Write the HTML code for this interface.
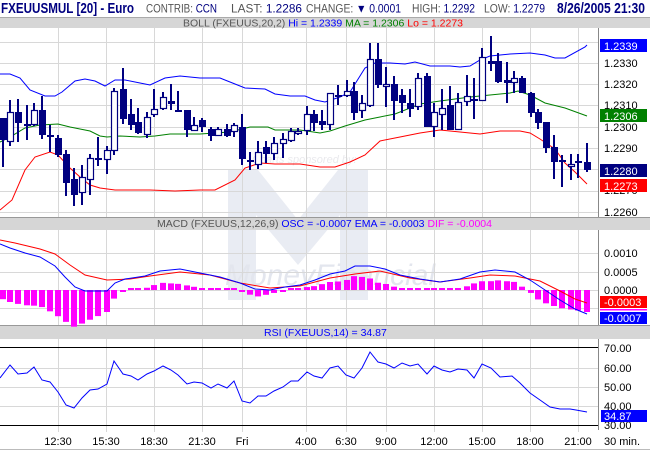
<!DOCTYPE html>
<html><head><meta charset="utf-8"><style>
body{margin:0;background:#fff;}
svg{display:block;font-family:"Liberation Sans",Arial,sans-serif;}
</style></head><body>
<svg id="s" width="650" height="450" viewBox="0 0 650 450" xmlns="http://www.w3.org/2000/svg">
<rect width="650" height="450" fill="#fff"/>
<!-- header -->
<text x="1" y="13" font-size="15" font-weight="bold" fill="#000080" textLength="133" lengthAdjust="spacingAndGlyphs">FXEUUSMUL [20] - Euro</text>
<text x="146" y="12.5" font-size="11.5" fill="#555" textLength="71" lengthAdjust="spacingAndGlyphs">CONTRIB: <tspan fill="#000080">CCN</tspan></text>
<text x="231" y="12.5" font-size="11.5" fill="#555" textLength="71" lengthAdjust="spacingAndGlyphs">LAST: <tspan fill="#000080">1.2286</tspan></text>
<text x="306" y="12.5" font-size="11.5" fill="#555" textLength="95" lengthAdjust="spacingAndGlyphs">CHANGE: <tspan fill="#000080">▼ 0.0001</tspan></text>
<text x="412" y="12.5" font-size="11.5" fill="#555" textLength="63" lengthAdjust="spacingAndGlyphs">HIGH: <tspan fill="#000080">1.2292</tspan></text>
<text x="484" y="12.5" font-size="11.5" fill="#555" textLength="61" lengthAdjust="spacingAndGlyphs">LOW: <tspan fill="#000080">1.2279</tspan></text>
<text x="557" y="13" font-size="15" font-weight="bold" fill="#000080" textLength="88" lengthAdjust="spacingAndGlyphs">8/26/2005 21:30</text>
<!-- bars -->
<rect x="0" y="17" width="650" height="11" fill="#d6d6d6"/>
<line x1="0" y1="17.5" x2="650" y2="17.5" stroke="#aaa"/>
<text x="183" y="26.5" font-size="10.5" fill="#555" textLength="280" lengthAdjust="spacingAndGlyphs">BOLL (FXEUUS,20,2) <tspan fill="#0000ff">Hi = 1.2339</tspan> <tspan fill="#008000">MA = 1.2306</tspan> <tspan fill="#ff0000">Lo = 1.2273</tspan></text>
<!-- watermark -->
<g opacity="0.3">
<text x="252" y="163" font-size="11" font-style="italic" fill="#b8b8c4">Charts sponsored by:</text>
<path d="M228 170 L258 170 L298 220 L338 170 L368 170 L368 300 L340 300 L340 215 L298 265 L256 215 L256 300 L228 300 Z" fill="#b9c1d8"/>
<text x="225" y="285" font-size="30" fill="#a5aec8" font-style="italic">MoneyFinancial</text>
</g>
<rect x="0" y="217" width="650" height="13" fill="#d6d6d6"/>
<line x1="0" y1="217.5" x2="650" y2="217.5" stroke="#999"/>
<text x="157" y="227" font-size="10.5" fill="#555" textLength="335" lengthAdjust="spacingAndGlyphs">MACD (FXEUUS,12,26,9) <tspan fill="#0000ff">OSC = -0.0007</tspan> <tspan fill="#0000ff">EMA = -0.0003</tspan> <tspan fill="#ff00ff">DIF = -0.0004</tspan></text>
<rect x="0" y="325" width="650" height="14" fill="#d6d6d6"/>
<line x1="0" y1="325.5" x2="650" y2="325.5" stroke="#999"/>
<text x="264" y="336" font-size="10.5" fill="#0000ff">RSI (FXEUUS,14) = 34.87</text>
<g id="grid" stroke="#d8d8d8" stroke-width="1"></g>
<g id="plot"></g>
<!-- separators -->
<line x1="598.5" y1="28" x2="598.5" y2="217" stroke="#888"/>
<line x1="598.5" y1="230" x2="598.5" y2="325" stroke="#888"/>
<line x1="598.5" y1="339" x2="598.5" y2="430" stroke="#888"/>
<line x1="0" y1="449.5" x2="650" y2="449.5" stroke="#bbb"/>
<!-- price axis -->
<g font-size="11" fill="#000">
<text x="604" y="67">1.2330</text><text x="604" y="88">1.2320</text><text x="604" y="109">1.2310</text>
<text x="604" y="131">1.2300</text><text x="604" y="152">1.2290</text><text x="604" y="194">1.2270</text><text x="604" y="216">1.2260</text>
<text x="604" y="257">0.0010</text><text x="604" y="276">0.0005</text><text x="604" y="294">0.0000</text>
<text x="604" y="352">70.00</text><text x="604" y="372">60.00</text><text x="604" y="391">50.00</text><text x="604" y="410">40.00</text><text x="604" y="429">30.00</text>
</g>
<g font-size="11" fill="#fff">
<rect x="600" y="39" width="47" height="13" fill="#0000ff"/><text x="604" y="50">1.2339</text>
<rect x="600" y="109" width="47" height="13" fill="#008000"/><text x="604" y="120">1.2306</text>
<rect x="600" y="164" width="47" height="13" fill="#000080"/><text x="604" y="175">1.2280</text>
<rect x="600" y="179" width="47" height="13" fill="#ff0000"/><text x="604" y="190">1.2273</text>
<rect x="600" y="296" width="47" height="12" fill="#ff0000"/><text x="604" y="306">-0.0003</text>
<rect x="600" y="309" width="47" height="1.5" fill="#ff00ff"/>
<rect x="600" y="312" width="47" height="12" fill="#0000ff"/><text x="604" y="322">-0.0007</text>
<rect x="601" y="410" width="46" height="12" fill="#0000ff"/><text x="604" y="420">34.87</text>
</g>
<g font-size="11" fill="#000" text-anchor="middle">
<text x="58" y="445">12:30</text><text x="106" y="445">15:30</text><text x="154" y="445">18:30</text><text x="202" y="445">21:30</text>
<text x="242" y="445">Fri</text><text x="306" y="445">4:00</text><text x="346" y="445">6:30</text><text x="386" y="445">9:00</text>
<text x="434" y="445">12:00</text><text x="482" y="445">15:00</text><text x="530" y="445">18:00</text><text x="578" y="445">21:00</text>
<text x="622" y="445">30 min.</text>
</g>
</svg>
<script>
var NS="http://www.w3.org/2000/svg";
function el(p,t,a){var e=document.createElementNS(NS,t);for(var k in a)e.setAttribute(k,a[k]);p.appendChild(e);return e;}
var grid=document.getElementById("grid"),plot=document.getElementById("plot");
var vx=[58,106,154,202,242,306,346,386,434,482,530,578];
vx.forEach(function(x){
 el(grid,"line",{x1:x+.5,y1:28,x2:x+.5,y2:217});
 el(grid,"line",{x1:x+.5,y1:230,x2:x+.5,y2:325});
 el(grid,"line",{x1:x+.5,y1:339,x2:x+.5,y2:432});
});
[42,63,84,105,127,148,169,191,212].forEach(function(y){el(grid,"line",{x1:0,y1:y+.5,x2:598,y2:y+.5});});
[253,272,290,308].forEach(function(y){el(grid,"line",{x1:0,y1:y+.5,x2:598,y2:y+.5});});
[368,387,406].forEach(function(y){el(grid,"line",{x1:0,y1:y+.5,x2:598,y2:y+.5});});
el(plot,"line",{x1:0,y1:347.5,x2:598,y2:347.5,stroke:"#000"});
el(plot,"line",{x1:0,y1:425.5,x2:598,y2:425.5,stroke:"#000"});
function pts(a){return a.map(function(p){return p[0]+","+p[1];}).join(" ");}
function interp(a,x){for(var i=0;i<a.length-1;i++){if(x>=a[i][0]&&x<=a[i+1][0]){var t=(x-a[i][0])/(a[i+1][0]-a[i][0]);return a[i][1]+t*(a[i+1][1]-a[i][1]);}}return a[a.length-1][1];}
var up=[[0,74],[10,74],[20,78],[30,90],[45,96],[55,96],[62,92],[75,81],[85,79],[95,81],[105,86],[115,80],[125,80],[140,83],[150,85],[165,78],[180,76],[200,78],[220,78],[235,84],[245,88],[265,89],[275,94],[290,96],[305,96],[315,100],[325,102],[340,97],[350,92],[365,68],[375,63],[390,63],[405,64],[415,62],[430,66],[450,66],[460,67],[470,66],[480,60],[490,56],[510,54],[530,53],[545,55],[555,58],[565,58],[585,47],[587,45]];
var mid=[[0,142],[10,137],[25,128],[40,125],[58,124],[70,127],[90,131],[100,136],[107,137],[120,136],[140,137],[155,136],[170,134],[200,134],[230,132],[250,127],[268,127],[275,130],[300,130],[320,133],[330,131],[345,126],[365,120],[380,117],[395,114],[420,104],[440,101],[470,97],[490,95],[510,93],[518,91],[530,95],[545,103],[565,108],[587,116]];
var lo=[[0,210],[12,200],[25,170],[35,157],[50,152],[58,155],[70,168],[80,177],[90,185],[100,188],[115,190],[150,190],[175,191],[200,190],[215,190],[235,180],[245,168],[260,163],[275,164],[300,164],[320,167],[335,167],[350,162],[365,155],[380,141],[400,137],[420,133],[440,130],[460,132],[480,134],[500,131],[520,131],[530,133],[540,139],[555,149],[565,163],[575,172],[587,184]];
var mb=[[0,244],[10,248],[25,253],[40,257],[55,266],[65,277],[75,287],[85,291],[107,291],[115,283],[125,279],[145,276],[160,271],[180,269],[200,273],[220,277],[240,283],[255,289],[270,290],[285,287],[300,285],[315,280],[330,274],[345,271],[355,266],[370,266],[385,269],[400,275],[420,279],[440,282],[460,279],[480,272],[495,270],[515,272],[530,280],[545,290],[560,300],[575,309],[587,314]];
var mr=[[0,240],[15,243],[40,249],[55,254],[70,265],[85,275],[107,280],[130,279],[150,276],[180,272],[210,275],[240,283],[270,288],[300,286],[330,278],[355,274],[380,271],[410,278],[440,282],[470,278],[490,275],[515,276],[540,281],[560,291],[575,299],[587,303]];
var rsi=[[0,378],[10,365],[18,374],[27,373],[34,367],[42,380],[50,382],[58,392],[66,405],[74,408],[82,398],[90,390],[98,389],[107,384],[114,361],[123,374],[131,376],[138,380],[147,374],[154,371],[163,366],[171,370],[178,375],[187,384],[194,382],[202,383],[211,388],[218,384],[227,388],[234,381],[242,401],[250,403],[258,396],[266,396],[274,391],[283,387],[291,381],[298,381],[307,372],[314,376],[322,378],[330,368],[338,366],[346,375],[354,378],[362,368],[370,352],[378,362],[386,364],[394,368],[402,363],[410,366],[418,364],[427,374],[434,366],[442,370],[450,372],[458,369],[467,370],[474,378],[482,364],[491,368],[500,377],[512,376],[520,383],[530,393],[540,400],[550,407],[560,409],[570,409],[576,410],[587,412]];
var C=[[3,118,140,118,167,1],[10,112,142,100,146,0],[18,112,123,99,142,1],[27,124,126,105,140,1],[34,110,125,103,126,0],[42,110,135,96,139,1],[50,135,137,125,152,1],[58,138,155,135,157,1],[66,154,183,150,196,1],[74,179,195,168,206,1],[82,177,193,165,205,0],[90,158,180,154,195,0],[98,158,159,137,166,1],[107,150,160,146,174,0],[114,91,151,88,155,0],[123,89,119,68,124,1],[131,114,125,99,130,1],[138,122,133,108,134,1],[147,117,135,112,138,0],[154,109,115,89,117,0],[163,97,109,92,110,0],[171,101,104,84,110,1],[178,110,112,91,112,1],[187,110,130,110,137,1],[194,125,131,117,131,0],[202,120,127,118,132,1],[211,129,136,127,141,1],[218,129,136,127,136,0],[227,129,136,124,137,1],[234,125,132,123,137,0],[242,127,159,114,165,1],[250,160,162,152,170,1],[258,152,165,141,169,0],[266,147,154,141,163,1],[274,143,154,137,160,0],[283,139,144,133,158,0],[291,131,141,128,142,0],[298,131,134,128,135,0],[307,114,131,106,135,0],[314,114,123,110,131,1],[322,121,125,110,130,1],[330,93,125,93,130,0],[338,95,97,85,105,1],[347,91,96,80,97,0],[354,91,113,82,120,1],[362,103,111,95,118,0],[370,59,106,43,107,0],[378,59,85,43,88,1],[386,84,87,67,107,0],[394,84,101,76,120,1],[402,95,103,89,113,1],[410,103,109,89,117,1],[418,78,107,73,110,0],[427,76,127,73,127,1],[434,112,127,103,137,0],[442,108,115,89,130,0],[450,105,130,86,130,1],[458,102,130,93,130,0],[467,96,102,75,106,0],[474,99,101,78,119,1],[482,57,101,48,101,0],[491,61,64,36,71,1],[498,61,82,53,83,1],[507,80,83,62,103,1],[514,78,83,71,93,0],[522,78,93,76,93,1],[531,93,113,92,117,1],[538,112,123,109,129,1],[546,122,148,122,153,1],[554,147,162,135,179,1],[562,160,162,155,187,1],[571,164,167,154,180,0],[578,161,163,154,178,1],[587,162,170,143,172,1]];
C.forEach(function(c){var x=c[0];var h=2*(interp(mb,x)-interp(mr,x));if(h<-8)h=-8+(h+8)*0.8;var y0=290,y1=290+h;if(Math.abs(h)<2)y1=290+(h<0?-2:2);
 el(plot,"rect",{x:x-3,y:Math.min(y0,y1),width:6,height:Math.abs(y1-y0),fill:"#ff00ff"});});
el(plot,"polyline",{points:pts(mr),fill:"none",stroke:"#ff0000","stroke-width":1});
el(plot,"polyline",{points:pts(mb),fill:"none",stroke:"#0000ff","stroke-width":1});
el(plot,"polyline",{points:pts(rsi),fill:"none",stroke:"#0000ff","stroke-width":1});
el(plot,"polyline",{points:pts(up),fill:"none",stroke:"#0000ff","stroke-width":1});
el(plot,"polyline",{points:pts(mid),fill:"none",stroke:"#008000","stroke-width":1});
el(plot,"polyline",{points:pts(lo),fill:"none",stroke:"#ff0000","stroke-width":1});
C.forEach(function(c){var x=c[0];
 el(plot,"line",{x1:x,y1:c[3],x2:x,y2:c[4],stroke:"#000080","stroke-width":2});
 var h=Math.max(c[2]-c[1],2);
 if(c[5])el(plot,"rect",{x:x-3,y:c[1],width:7,height:h,fill:"#000080"});
 else el(plot,"rect",{x:x-2.5,y:c[1]+.5,width:6,height:h-1,fill:"#fff",stroke:"#000080","stroke-width":1.2});
});
</script>
</body></html>
